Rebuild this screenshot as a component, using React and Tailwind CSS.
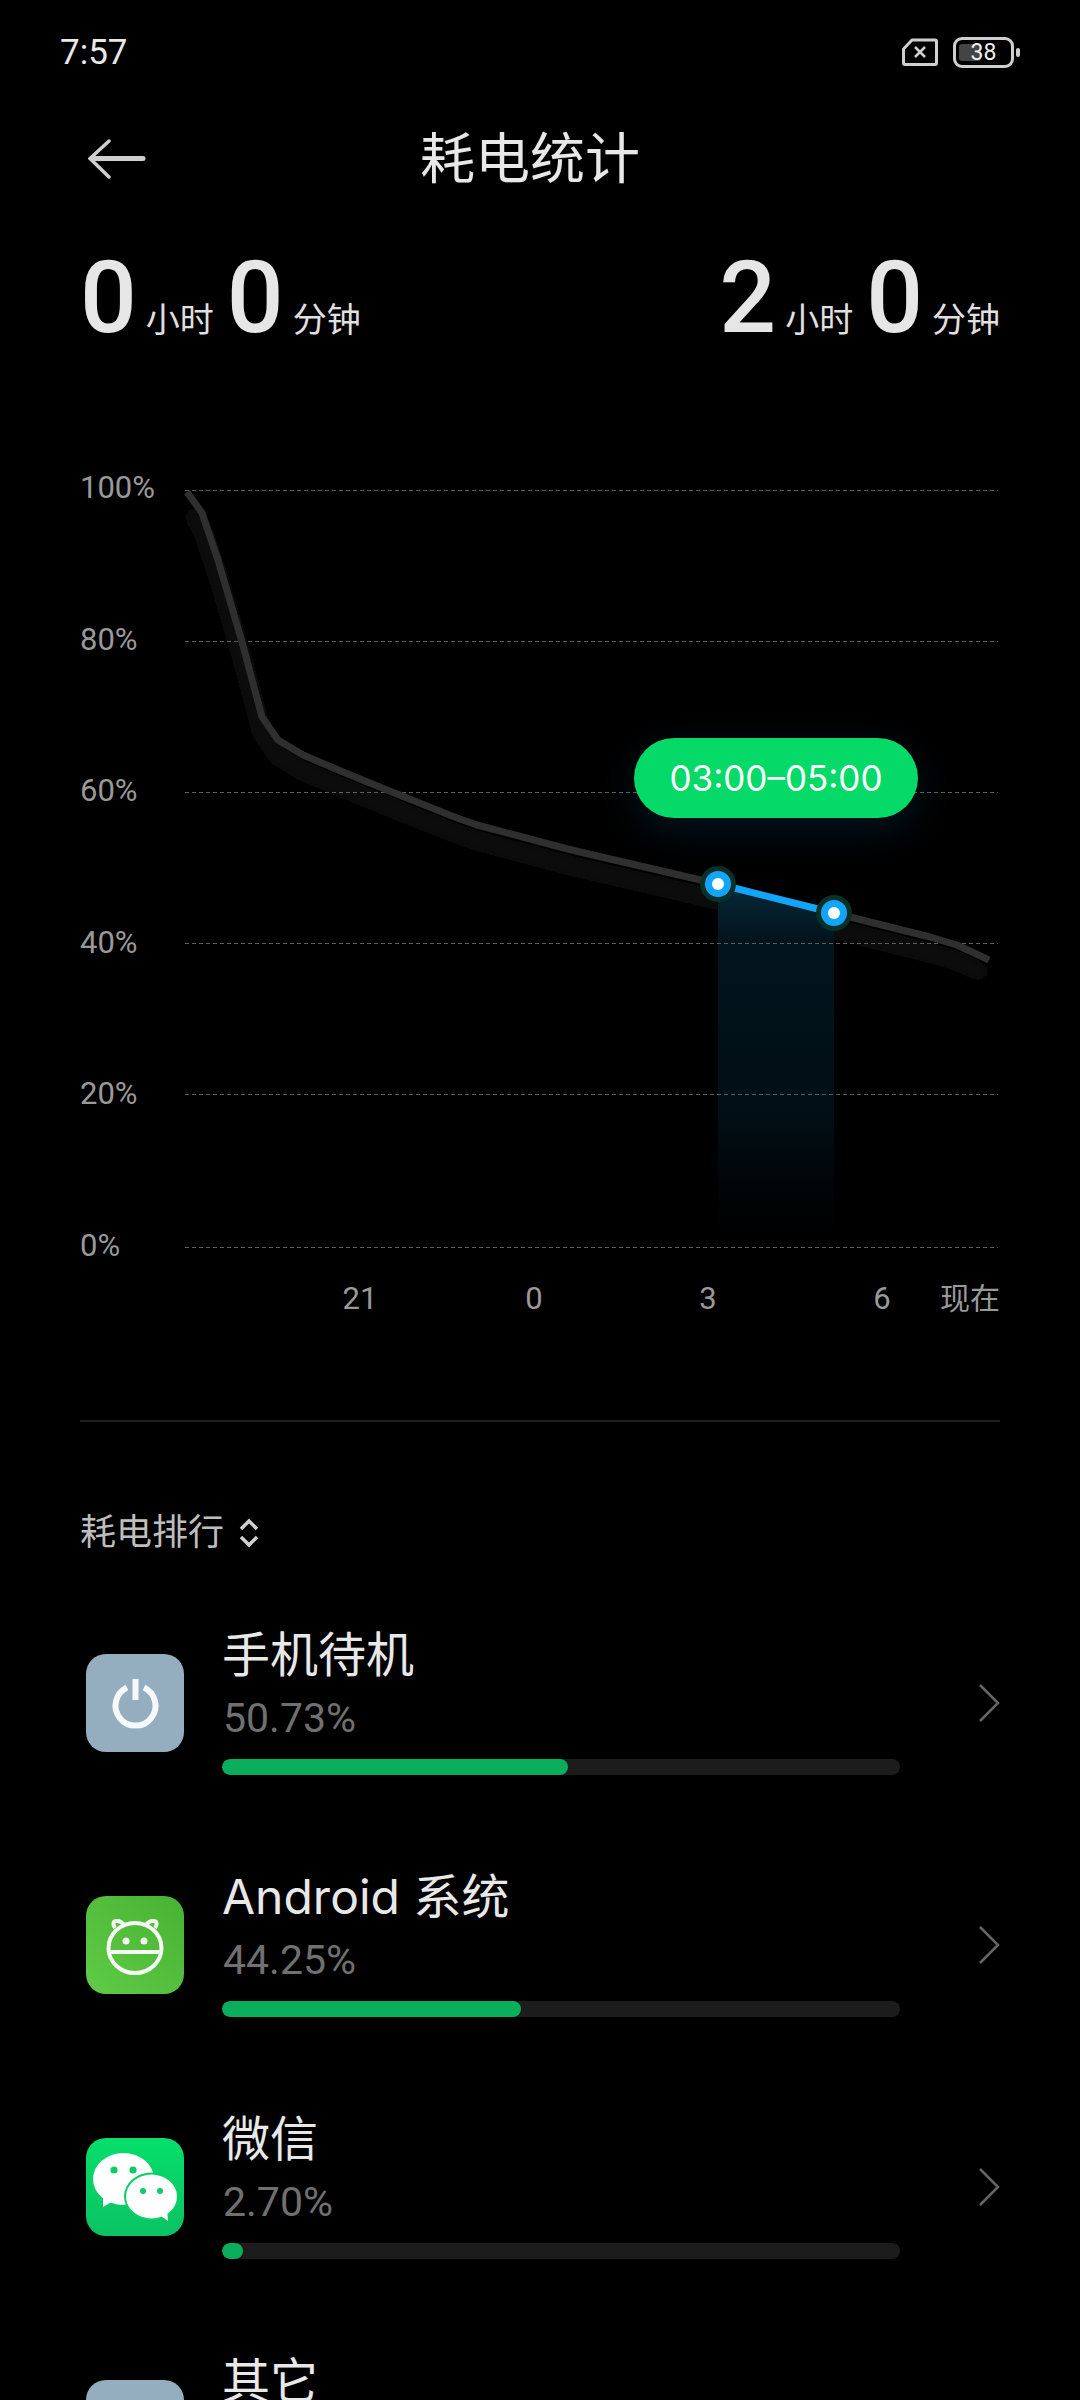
const curve = "M187 492 L202 513 L218 560 L242 642 L262 717 L278 740 L303 755 L343 772 L387 790 L457 818 L477 825 L560 847 L580 852 L718 884 L834 913 L930 937 L957 945 L989 960";
const gridLines = [490.5, 641.5, 792.5, 943.5, 1094.5, 1247.5];
const yLabels = ["100%", "80%", "60%", "40%", "20%", "0%"];
const xLabels = ["21", "0", "3", "6"];

function PowerIcon() {
  return (
    <div className="w-[98px] h-[98px] rounded-[20px] bg-[#94aec0] shrink-0">
      <svg viewBox="0 0 98 98" className="w-full h-full" fill="none" stroke="#f6f8f9" strokeWidth="6" strokeLinecap="butt">
        <path d="M41 33.500 A20 20 0 1 0 58 33.500" />
        <path d="M49.500 25 V46" />
      </svg>
    </div>
  );
}

function AndroidIcon() {
  return (
    <div className="w-[98px] h-[98px] rounded-[20px] bg-gradient-to-tr from-[#5fcb46] to-[#48b233] shrink-0">
      <svg viewBox="0 0 98 98" className="w-full h-full" fill="none" stroke="#f7fbf5" strokeWidth="4">
        <ellipse cx="49" cy="52" rx="26.500" ry="25" />
        <path d="M23.500 56 H74.500" />
        <path d="M38 29 C36 26 33 24.500 30 25 C27 25.500 26.500 29 29 32" />
        <path d="M60 29 C62 26 65 24.500 68 25 C71 25.500 71.500 29 69 32" />
        <circle cx="40" cy="45" r="3.500" fill="#f7fbf5" stroke="none" />
        <circle cx="58" cy="45" r="3.500" fill="#f7fbf5" stroke="none" />
      </svg>
    </div>
  );
}

function WechatIcon() {
  return (
    <div className="w-[98px] h-[98px] rounded-[20px] bg-gradient-to-b from-[#06df6b] to-[#0ac263] shrink-0">
      <svg viewBox="0 0 98 98" className="w-full h-full">
        <ellipse cx="37.500" cy="41" rx="30.500" ry="26" fill="#fff" />
        <path d="M17 58 L17 69 L29 62 Z" fill="#fff" />
        <ellipse cx="65.500" cy="58.500" rx="27.500" ry="24" fill="#0ad066" />
        <ellipse cx="65.500" cy="58.500" rx="25.500" ry="22" fill="#fff" />
        <path d="M72 76 L82 83 L81 70 Z" fill="#fff" />
        <circle cx="28" cy="32" r="3.600" fill="#0bcc66" />
        <circle cx="47" cy="32" r="3.600" fill="#0bcc66" />
        <circle cx="57" cy="53" r="3" fill="#0bcc66" />
        <circle cx="74" cy="53" r="3" fill="#0bcc66" />
      </svg>
    </div>
  );
}

function OtherIcon() {
  return <div className="w-[98px] h-[98px] rounded-[20px] bg-[#94aec0] shrink-0" />;
}

const items = [
  { name: "手机待机", pct: "50.73%", fill: 346, icon: <PowerIcon /> },
  { name: "Android 系统", pct: "44.25%", fill: 299, icon: <AndroidIcon /> },
  { name: "微信", pct: "2.70%", fill: 21, icon: <WechatIcon /> },
  { name: "其它", icon: <OtherIcon /> },
];

function Stat({ hours, minutes }) {
  return (
    <div className="flex items-baseline">
      <span className="text-[100px] leading-none font-medium text-[#e6e6e6]">{hours}</span>
      <span className="text-[34px] leading-none text-[#e0e0e0] ml-[9px]">小时</span>
      <span className="text-[100px] leading-none font-medium text-[#e6e6e6] ml-[13px]">{minutes}</span>
      <span className="text-[34px] leading-none text-[#e0e0e0] ml-[9px]">分钟</span>
    </div>
  );
}

export default function App() {
  return (
    <div className="w-[1080px] h-[2400px] overflow-hidden bg-black px-[80px] font-['Roboto','Noto_Sans_CJK_SC',sans-serif]">

      {/* status bar */}
      <div className="h-[104px] -mx-[20px] flex items-center justify-between">
        <span className="text-[35px] text-[#e8e8e8] leading-none">7:57</span>
        <div className="flex items-center">
          <svg width="36" height="28" viewBox="0 0 36 28" fill="none" stroke="#cfcfcf" strokeWidth="3" strokeLinejoin="round">
            <path d="M10 2 H33 C34 2 34.500 2.500 34.500 3.500 V25 C34.500 26 34 26.500 33 26.500 H3 C2 26.500 1.500 26 1.500 25 V11 Z" />
            <path d="M13 9 L23 19 M23 9 L13 19" strokeWidth="2.500" />
          </svg>
          <div className="relative ml-[15px] w-[61px] h-[31px] rounded-[9px] border-[3px] border-[#cfcfcf] flex items-center justify-center">
            <div className="absolute left-[3px] top-[4px] w-[22px] h-[17px] rounded-[3px] bg-[#444]" />
            <span className="relative text-[23px] leading-none text-[#eee]">38</span>
          </div>
          <div className="w-[4px] h-[9px] ml-[2px] rounded-[2px] bg-[#cfcfcf]" />
        </div>
      </div>

      {/* nav */}
      <div className="h-[110px] flex items-center">
        <svg width="58" height="40" viewBox="0 0 58 40" fill="none" stroke="#cfcfcf" strokeWidth="3.500" strokeLinecap="round" className="ml-[8px]">
          <path d="M21 2 L2 19.500 L21 38" />
          <path d="M4 19.500 H55" strokeWidth="5" />
        </svg>
        <h1 className="ml-[274px] text-[55px] leading-none font-normal text-[#e8e8e8]">耗电统计</h1>
      </div>

      {/* totals */}
      <div className="h-[162px] pt-[6px] flex items-center justify-between">
        <Stat hours="0" minutes="0" />
        <Stat hours="2" minutes="0" />
      </div>

      {/* chart */}
      <div className="relative h-[850px] mt-[92px]">
        <svg viewBox="80 468 920 850" className="absolute inset-0 w-full h-full" fill="none">
          <defs>
            <linearGradient id="band" x1="0" y1="0" x2="0" y2="1">
              <stop offset="0" stopColor="#08293a" />
              <stop offset="0.16" stopColor="#02141c" />
              <stop offset="0.65" stopColor="#010f16" />
              <stop offset="1" stopColor="#000000" />
            </linearGradient>
            <filter id="soft" x="-10%" y="-10%" width="120%" height="130%">
              <feGaussianBlur stdDeviation="10" />
            </filter>
          </defs>
          <path d={curve} transform="translate(0 16)" stroke="#0a0a0a" strokeWidth="20" filter="url(#soft)" />
          <path d="M718 884 L834 913 V1230 H718 Z" fill="url(#band)" />
          {gridLines.map((y) => (
            <path key={y} d={`M185 ${y} H998`} stroke="#5c5c5c" strokeWidth="1" strokeDasharray="4 3" />
          ))}
          <path d={curve} stroke="#2f2f2f" strokeWidth="7" strokeLinejoin="round" />
          <path d="M718 884 L834 913" stroke="#13a4fb" strokeWidth="7" />
          <circle cx="718" cy="884" r="18" fill="#0a3028" />
          <circle cx="834" cy="913" r="18" fill="#0a3028" />
          <circle cx="718" cy="884" r="13" fill="#13a4fb" />
          <circle cx="834" cy="913" r="13" fill="#13a4fb" />
          <circle cx="718" cy="884" r="6" fill="#fff" />
          <circle cx="834" cy="913" r="6" fill="#fff" />
        </svg>

        <div className="relative flex flex-col gap-[111.500px] text-[31px] text-[#999] leading-[40px]">
          {yLabels.map((label) => (
            <span key={label}>{label}</span>
          ))}
        </div>

        <div className="relative mt-[13px] flex text-[31px] text-[#999] leading-[40px]">
          <div className="flex pl-[250px] gap-[114px]">
            {xLabels.map((label) => (
              <span key={label} className="w-[60px] text-center">{label}</span>
            ))}
          </div>
          <span className="ml-auto whitespace-nowrap text-[30px]">现在</span>
        </div>

        <div className="absolute left-[554px] top-[270px] w-[284px] h-[80px] rounded-full bg-[#05d968] flex items-center justify-center text-[35px] text-white font-['Inter',sans-serif] shadow-[0_12px_40px_rgba(19,164,251,0.13)]">
          03:00–05:00
        </div>
      </div>

      <div className="h-[2px] mt-[102px] bg-[#1f1f1f]" />

      {/* ranking */}
      <div className="mt-[91px] h-[40px] flex items-center text-[36px] text-[#bdbdbd]">
        <span>耗电排行</span>
        <svg width="22" height="30" viewBox="0 0 22 30" fill="none" stroke="#cfcfcf" strokeWidth="3.500" className="ml-[14px]">
          <path d="M3 11 L11 3 L19 11" />
          <path d="M3 19 L11 27 L19 19" />
        </svg>
      </div>

      <div className="mt-[29px]">
        {items.map((item) => (
          <div key={item.name} className="h-[242px] flex items-center pl-[6px]">
            {item.icon}
            <div className="self-start pt-[43px] ml-[38px] w-[678px]">
              <div className="text-[48px] leading-[60px] text-[#e8e8e8] font-['Inter','Noto_Sans_CJK_SC',sans-serif]">{item.name}</div>
              {item.pct && (
                <>
                  <div className="text-[41px] leading-[46px] pl-[1px] mt-[10px] text-[#707070]">{item.pct}</div>
                  <div className="h-[16px] mt-[18px] rounded-full bg-[#1c1c1c] overflow-hidden">
                    <div className="h-full rounded-full bg-[#08ae5b]" style={{ width: item.fill }} />
                  </div>
                </>
              )}
            </div>
            <svg width="22" height="38" viewBox="0 0 22 38" fill="none" stroke="#666" strokeWidth="2.500" className="ml-auto">
              <path d="M2 1 L20 19 L2 37" />
            </svg>
          </div>
        ))}
      </div>
    </div>
  );
}
